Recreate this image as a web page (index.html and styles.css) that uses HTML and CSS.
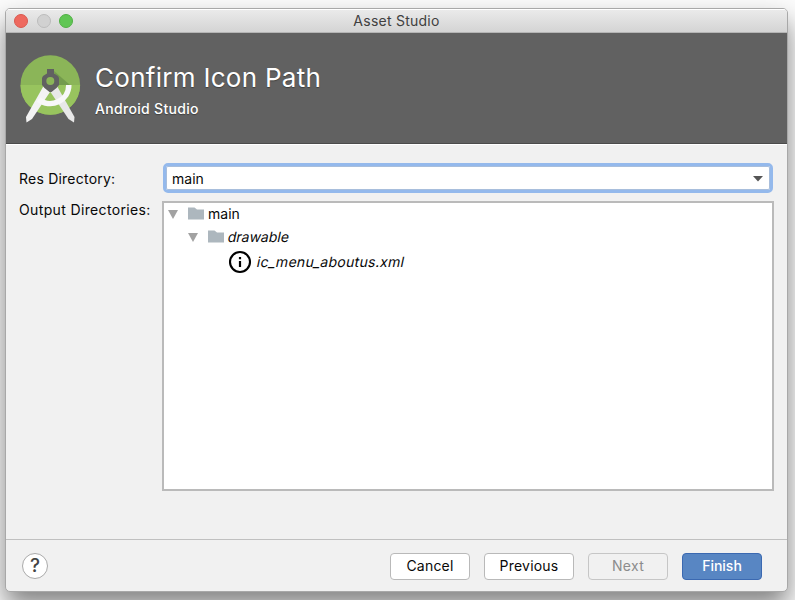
FILE: index.html
```html
<!DOCTYPE html>
<html lang="en">
<head>
<meta charset="utf-8">
<title>Asset Studio</title>
<link rel="stylesheet" href="styles.css">
</head>
<body>
<div class="window">
  <div class="titlebar">
    <div class="lights"><i class="light close"></i><i class="light minimize"></i><i class="light maximize"></i></div>
    <span class="window-title">Asset Studio</span>
  </div>
  <header class="banner">
    <svg class="logo" width="62" height="70" viewBox="0 0 62 70">
      <circle cx="31.3" cy="31" r="29.8" fill="#8bb558"/>
      <path d="M1.5 31a29.8 29.8 0 0 0 59.6 0z" fill="#98c45e"/>
      <path d="M35 17L51 31H37z" fill="#739b4c"/>
      <path d="M24.5 32L31 38L13 65L7.5 68.5L7 63Z" fill="#f3f3f3"/>
      <path d="M38 32L31.5 38L49.5 65L55 68.5L55.5 63Z" fill="#e8e8e8"/>
      <path d="M19.5 45.3A18.5 18.5 0 0 0 49.8 31" fill="none" stroke="#f8f8f8" stroke-width="5.5"/>
      <path d="M28 15h7v4.5l4 2.5 1 2v7l-2.5 3-5 4h-2l-5-4-2.5-3v-7l1-2 4-2.5z" fill="#616161"/>
      <circle cx="31.3" cy="27" r="4" fill="#8bb558"/>
    </svg>
    <div class="heading">
      <h1>Confirm Icon Path</h1>
      <p>Android Studio</p>
    </div>
  </header>
  <main class="content">
    <label class="label res-label">Res Directory:</label>
    <div class="combo">
      <span>main</span>
      <svg width="10" height="6" viewBox="0 0 10 6"><path d="M0 0h10L5 5.5z" fill="#555"/></svg>
    </div>
    <label class="label out-label">Output Directories:</label>
    <div class="tree">
      <div class="row">
        <svg class="arrow" width="10" height="9" viewBox="0 0 10 9"><path d="M0 0h10L5 9z" fill="#a2a2a2"/></svg>
        <svg class="folder" width="16" height="13" viewBox="0 0 16 13"><path d="M0 .5h6.5L9 2.5h7V12.5H0z" fill="#adb7be"/></svg>
        <span>main</span>
      </div>
      <div class="row child">
        <svg class="arrow" width="10" height="9" viewBox="0 0 10 9"><path d="M0 0h10L5 9z" fill="#a2a2a2"/></svg>
        <svg class="folder" width="16" height="13" viewBox="0 0 16 13"><path d="M0 .5h6.5L9 2.5h7V12.5H0z" fill="#adb7be"/></svg>
        <span class="slanted drawable">drawable</span>
      </div>
      <div class="row leaf">
        <svg width="24" height="24" viewBox="0 0 24 24"><circle cx="12" cy="12" r="10" fill="none" stroke="#000" stroke-width="2.1"/><path d="M10.9 7h2.2v2.2h-2.2zM10.9 11h2.2v6h-2.2z"/></svg>
        <span class="slanted file">ic_menu_aboutus.xml</span>
      </div>
    </div>
  </main>
  <footer class="footer">
    <button class="help">?</button>
    <div class="actions">
      <button class="btn cancel">Cancel</button>
      <button class="btn previous">Previous</button>
      <button class="btn next" disabled>Next</button>
      <button class="btn finish">Finish</button>
    </div>
  </footer>
</div>
</body>
</html>
```
FILE: styles.css
```css
* { box-sizing: border-box; }
html { height: 100%; overflow: hidden; background: #fbfbfb; }
body { margin: 0; padding: 8px 7px 8px 5px; height: 600px; overflow: hidden; font: 14px/18px Inter, sans-serif; color: #080808; }
.window { height: 584px; display: flex; flex-direction: column; border: 1px solid #a8a8a8; border-radius: 5px; background: #f1f1f1; box-shadow: 0 14px 26px rgba(0,0,0,.48); overflow: hidden; }
.titlebar { height: 24px; flex: none; display: grid; grid-template-columns: 1fr auto 1fr; align-items: center; background: linear-gradient(#eaeaea, #d4d4d4); border-top: 1px solid #fff; border-bottom: 1px solid #b5b5b5; }
.lights { display: flex; gap: 8.4px; padding-left: 8.3px; }
.light { width: 14px; height: 14px; border-radius: 50%; border: 1px solid; }
.close { background: #ee695f; border-color: #d9594f; }
.minimize { background: #d1d1d1; border-color: #bcbcbc; }
.maximize { background: #60c654; border-color: #50b045; }
.window-title { color: #404040; letter-spacing: .25px; }
.banner { height: 111px; flex: none; background: #616161; border-bottom: 1px solid #4b4b4b; display: flex; padding: 21px 0 0 13px; color: #fff; }
.heading { padding-left: 14px; text-shadow: 0 1px 1px rgba(0,0,0,.35); }
h1 { margin: 7px 0 0; font-size: 26px; line-height: 34px; font-weight: 400; letter-spacing: .28px; }
.heading p { margin: 5px 0 0; font-weight: 500; letter-spacing: .32px; }
.content { flex: 1; display: grid; grid-template-columns: 143px 612px; grid-template-rows: 32px 289px; row-gap: 6px; padding: 19px 0 0 13px; border-top: 1px solid #fff; }
.res-label { padding-top: 6px; letter-spacing: .22px; }
.out-label { margin-top: -1px; letter-spacing: .36px; }
.combo { margin: -1px 1px 0; height: 30px; border: 3px solid #94b9ec; border-radius: 5px; background: #fff; box-shadow: inset 0 0 0 1px #a8bedc; display: flex; justify-content: space-between; align-items: center; padding: 1px 7px 0 6px; }
.tree { margin-top: -1px; background: #fff; border: 2px solid #bababa; }
.row { height: 22px; display: flex; align-items: center; padding-left: 4px; }
.arrow { margin-right: 10px; }
.folder { margin: -2px 4px 0 0; }
.child { height: 24px; padding-left: 24px; }
.leaf { height: 26px; padding-left: 64px; gap: 5px; }
.slanted { display: inline-block; transform: skewX(-12deg); }
.file { letter-spacing: .3px; }
.footer { height: 52px; flex: none; border-top: 1px solid #c0c0c0; display: flex; align-items: center; justify-content: space-between; padding: 1px 25px 0 16px; }
.help { width: 26px; height: 26px; padding: 0; border: 1px solid #aaa; border-radius: 50%; background: #fff; font: 500 19px/24px Inter, sans-serif; color: #444; }
.actions { display: flex; gap: 14px; padding-top: 1px; }
.btn { width: 80px; height: 27px; padding: 0 0 1px; border: 1px solid #b9b9b9; border-radius: 4px; background: #fff; font: 14px/24px Inter, sans-serif; color: #080808; }
.cancel, .previous { letter-spacing: .2px; }
.previous { width: 90px; }
.next { background: #f1f1f1; border-color: #c6c6c6; color: #8c8c8c; letter-spacing: .3px; }
.finish { background: #5886c3; border-color: #3b69b1; color: #fff; font-weight: 500; }
```
